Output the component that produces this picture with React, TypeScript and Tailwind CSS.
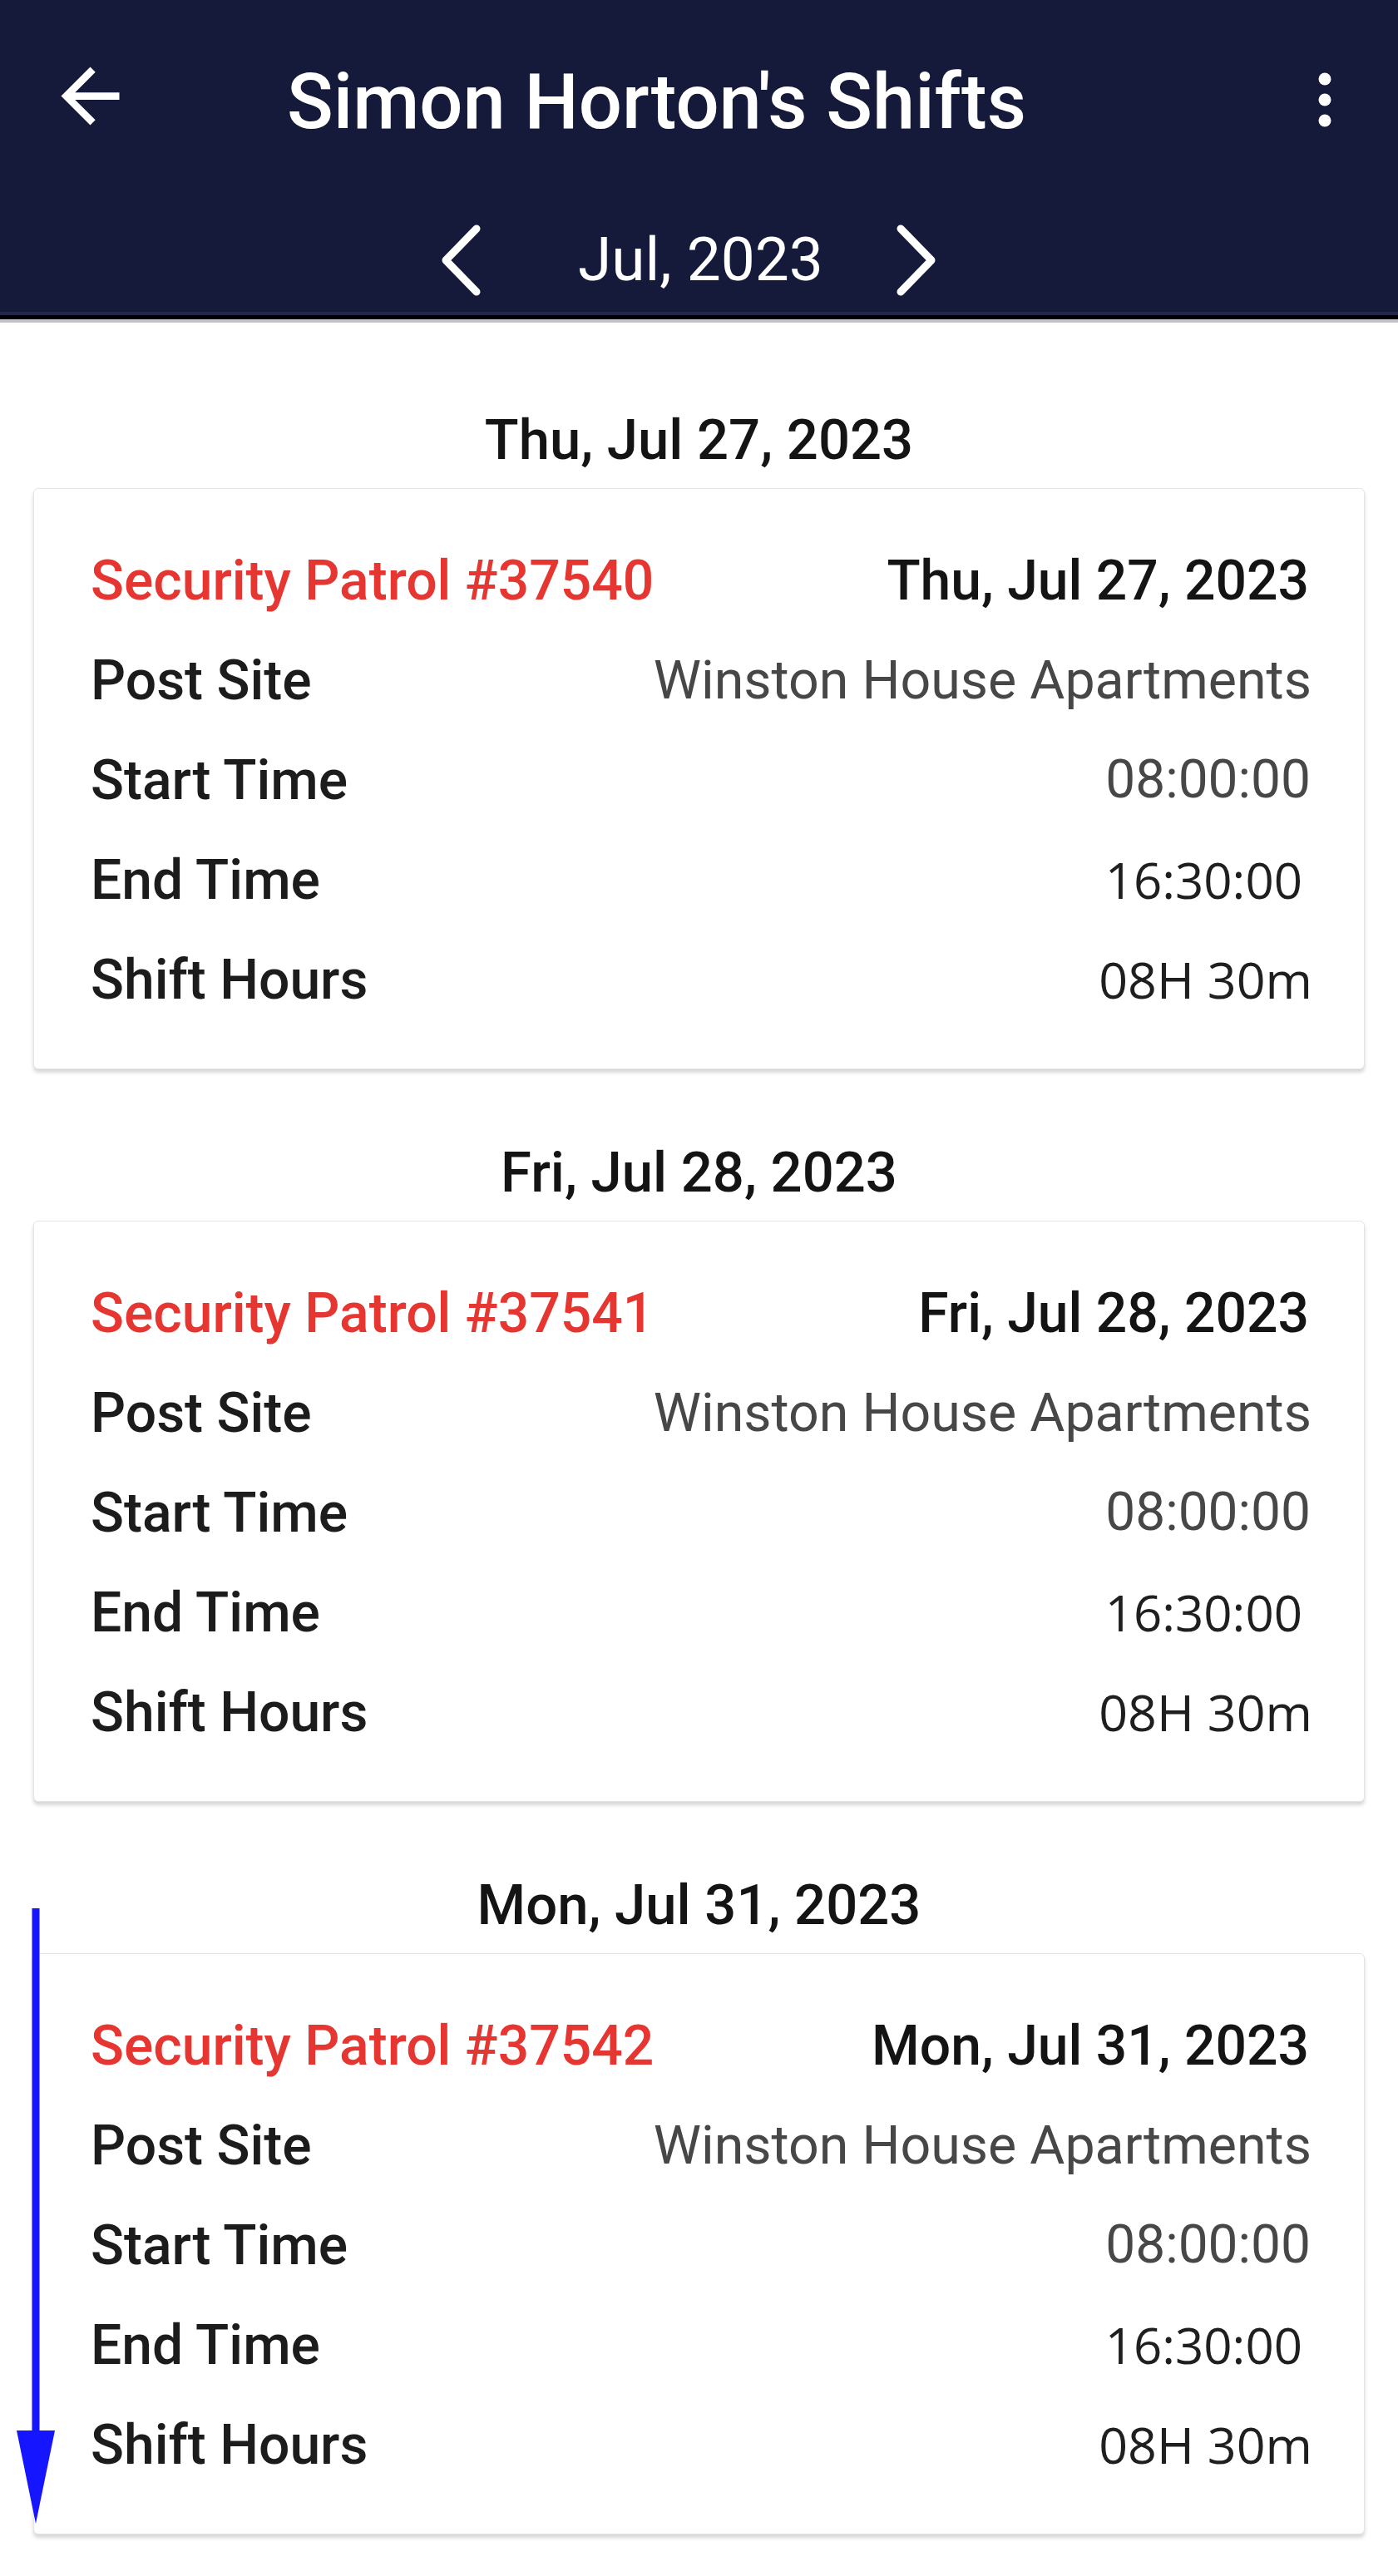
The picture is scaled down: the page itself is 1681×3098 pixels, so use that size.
const shifts = [
  { id: "37540", date: "Thu, Jul 27, 2023" },
  { id: "37541", date: "Fri, Jul 28, 2023" },
  { id: "37542", date: "Mon, Jul 31, 2023" },
];

function BackArrow() {
  return (
    <svg width="105" height="105" viewBox="0 0 24 24" fill="#ffffff">
      <path d="M20 11H7.83l5.59-5.59L12 4l-8 8 8 8 1.41-1.41L7.83 13H20v-2z" />
    </svg>
  );
}

function Kebab() {
  return (
    <svg width="40" height="80" viewBox="0 0 40 80" fill="#ffffff">
      <circle cx="20" cy="15" r="7.5" />
      <circle cx="20" cy="40" r="7.5" />
      <circle cx="20" cy="65" r="7.5" />
    </svg>
  );
}

function Chevron({ dir }: { dir: "left" | "right" }) {
  return (
    <svg width="48" height="86" viewBox="0 0 48 86" fill="none">
      <polyline
        points={dir === "left" ? "43,5 6,43 43,81" : "5,5 42,43 5,81"}
        stroke="#ffffff"
        strokeWidth="9"
        strokeLinecap="round"
        strokeLinejoin="round"
      />
    </svg>
  );
}

function Row({ label, children }: { label: string; children: React.ReactNode }) {
  return (
    <div className="flex h-[120px] items-center justify-between">
      <span className="font-['Roboto',sans-serif] text-[66px] font-medium text-[#1c1c1c]">{label}</span>
      {children}
    </div>
  );
}

function ShiftCard({ id, date }: { id: string; date: string }) {
  return (
    <div className="mx-[40px] rounded-[6px] border border-[#e4e4e4] bg-white pb-[47px] pl-[68px] pr-[66px] pt-[50px] shadow-[0_4px_4px_rgba(0,0,0,0.16)]">
      <div className="flex h-[120px] items-center justify-between">
        <span className="font-['Roboto',sans-serif] text-[66px] font-medium text-[#e53631]">
          Security Patrol #{id}
        </span>
        <span className="font-['Roboto',sans-serif] text-[66px] font-medium text-[#141414]">{date}</span>
      </div>
      <Row label="Post Site">
        <span className="-mr-[3px] font-['Roboto',sans-serif] text-[64.5px] text-[#474747]">Winston House Apartments</span>
      </Row>
      <Row label="Start Time">
        <span className="-mr-[2px] font-['Roboto',sans-serif] text-[64px] text-[#474747]">08:00:00</span>
      </Row>
      <Row label="End Time">
        <span className="mr-[8px] font-['Open_Sans',sans-serif] text-[60px] text-[#1f1f1f]">16:30:00</span>
      </Row>
      <Row label="Shift Hours">
        <span className="-mr-[4px] font-['Open_Sans',sans-serif] text-[61px] text-[#1f1f1f]">08H 30m</span>
      </Row>
    </div>
  );
}

export default function App() {
  return (
    <div className="relative min-h-[3098px] w-[1681px] bg-white font-['Roboto',sans-serif]">
      <header className="bg-[#161a3a]">
        <div className="flex h-[240px] items-center pl-[56px] pr-[68px]">
          <div className="-mt-[10px]">
            <BackArrow />
          </div>
          <h1 className="ml-[184px] mt-[6px] text-[92px] font-medium text-white">Simon Horton's Shifts</h1>
          <div className="ml-auto">
            <Kebab />
          </div>
        </div>
        <div className="flex h-[135px] items-center pl-[530px] pt-[10px]">
          <Chevron dir="left" />
          <span className="ml-[117px] mr-[88px] text-[73px] text-white">Jul, 2023</span>
          <Chevron dir="right" />
        </div>
      </header>
      <div className="h-[4px] bg-[#23274a]" />
      <div className="h-[5px] bg-black" />
      <div className="h-[4px] bg-[#c1c3c9]" />

      <main className="pb-[58px] pt-[101px]">
        {shifts.map((s, i) => (
          <section key={s.id} className={i > 0 ? "mt-[84px]" : ""}>
            <div className="mb-[18px] flex h-[80px] items-center justify-center">
              <span className="text-[67px] font-medium text-[#141414]">{s.date}</span>
            </div>
            <ShiftCard id={s.id} date={s.date} />
          </section>
        ))}
      </main>

      <svg className="absolute left-[20px] top-[2295px]" width="46" height="740" viewBox="0 0 46 740">
        <rect x="18.5" y="0" width="9" height="640" fill="#1515ff" />
        <polygon points="0,628 46,628 23,740" fill="#1515ff" />
      </svg>
    </div>
  );
}
